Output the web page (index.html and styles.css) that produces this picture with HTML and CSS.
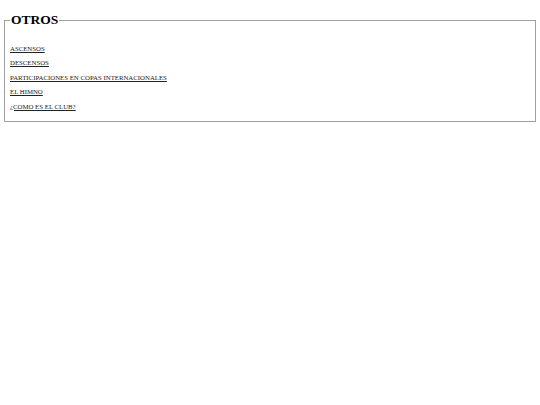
FILE: index.html
```html
<!DOCTYPE html>
<html>
<head>
<meta charset="utf-8">
<link rel="stylesheet" href="styles.css">
</head>
<body>
<fieldset class="box">
  <legend class="title">OTROS</legend>
  <ul class="links">
    <li><a href="#">ASCENSOS</a></li>
    <li><a href="#">DESCENSOS</a></li>
    <li><a href="#">PARTICIPACIONES EN COPAS INTERNACIONALES</a></li>
    <li><a href="#">EL HIMNO</a></li>
    <li><a href="#">¿COMO ES EL CLUB?</a></li>
  </ul>
</fieldset>
</body>
</html>
```

FILE: styles.css
```css
body {
  margin: 12px 4px;
  font-family: "Liberation Serif", serif;
  background: #fff;
}
.box {
  margin: 0;
  border: 1px solid #a0a0a0;
  padding: 0 5px 7px 5px;
}
.title {
  font-size: 13.5px;
  font-weight: bold;
  padding: 0 1px;
  margin-left: 0;
  color: #000;
}
.links {
  list-style: none;
  margin: 0;
  padding: 14px 0 0 0;
  display: flex;
  flex-direction: column;
}
.links li {
  font-size: 6.8px;
  line-height: 14.4px;
}
.links a {
  color: #222;
}
```
